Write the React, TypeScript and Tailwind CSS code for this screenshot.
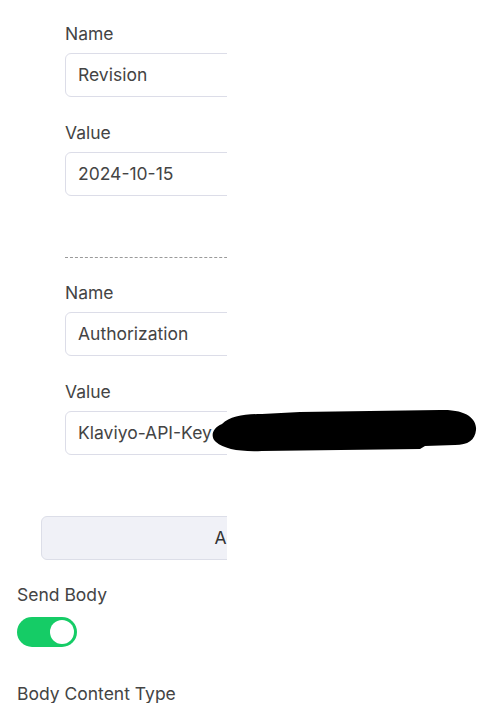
import React from 'react';

const Field: React.FC<{ label: string; value: string; className?: string }> = ({ label, value, className = '' }) => (
  <div className={className}>
    <div className="h-6 text-[17.5px] leading-[25px] text-[#444]">{label}</div>
    <div className="mt-2 flex h-11 items-center whitespace-nowrap rounded-md border border-[#dcdde8] bg-white px-3 text-[17.5px] text-[#444]">
      {value}
    </div>
  </div>
);

const App: React.FC = () => {
  return (
    <div className="relative h-[703px] w-[478px] overflow-hidden bg-white" style={{ fontFamily: 'Inter, "Noto Sans", sans-serif' }}>
      <div className="w-[227px] overflow-hidden">
        <div className="w-[480px] pl-[17px] pt-[21px]">
          <div className="pl-6">
            <div className="pl-6 pr-6">
              <Field label="Name" value="Revision" />
              <Field label="Value" value="2024-10-15" className="mt-[23px]" />
              <div className="mb-[22px] mt-[61px] border-t border-dashed border-[#9a9a9a]" />
              <Field label="Name" value="Authorization" />
              <Field label="Value" value="Klaviyo-API-Key pk_xxxxxxxxxxxxxxxxxxxx" className="mt-[23px]" />
            </div>
            <button className="mt-[61px] flex h-11 w-[446px] items-center justify-center whitespace-nowrap rounded-md border border-[#dcdee8] bg-[#f0f1f7] text-[17.5px] text-[#333]">
              Add Header
            </button>
          </div>
          <div className="mt-[22px] h-6 text-[17.5px] leading-[25px] text-[#444]">Send Body</div>
          <div className="mt-[11px] flex h-[30px] w-[60px] items-center justify-end rounded-full bg-[#15cc66] p-[3px]">
            <div className="h-6 w-6 rounded-full bg-white" />
          </div>
          <div className="mt-[34px] h-6 whitespace-nowrap text-[17.5px] leading-[25px] text-[#444]">Body Content Type</div>
        </div>
      </div>
      <svg className="absolute left-0 top-0" width="478" height="703" viewBox="0 0 478 703">
        <path
          d="M222 424 C230 416 245 414 262 414 L300 412 L440 410 C468 409 477 420 476 430 C475 440 468 445 455 445 L425 446 L420 449 L262 451 C240 452 224 449 216 442 C210 437 212 428 222 424 Z"
          fill="#000"
        />
      </svg>
    </div>
  );
};

export default App;
